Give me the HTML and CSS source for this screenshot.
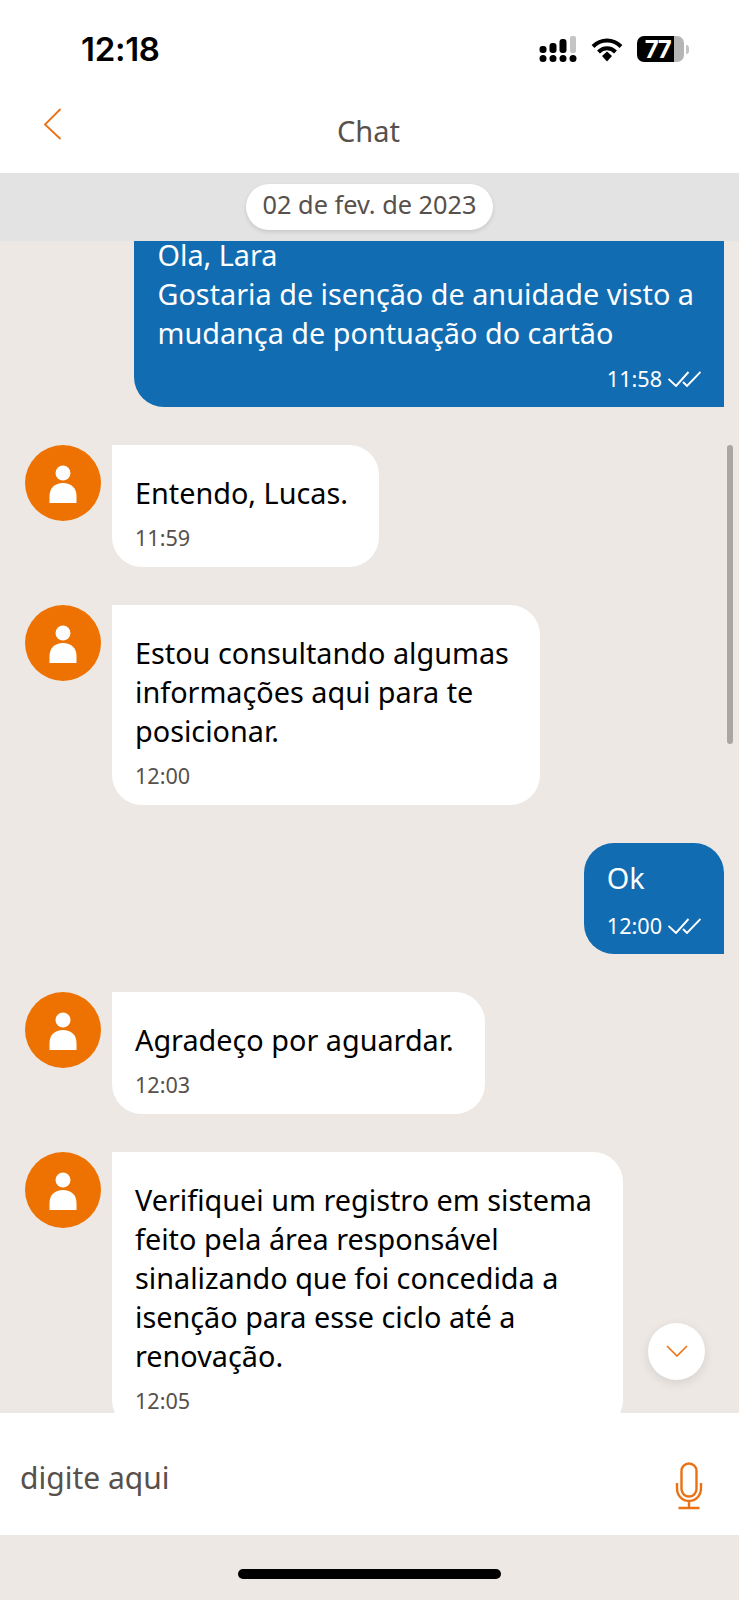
FILE: index.html
```html
<!DOCTYPE html>
<html lang="pt-BR">
<head>
    <meta charset="UTF-8">
    <meta name="viewport" content="width=device-width, initial-scale=1.0">
    <title>Chat</title>
    <link rel="stylesheet" href="styles.css">
</head>
<body>
    <div class="status-bar">
        <span class="clock">12:18</span>
        <div class="status-icons">
            <svg class="signal" width="38" height="26" viewBox="0 0 38 26">
                <rect x="0.500" y="10" width="7" height="7" rx="3" fill="#000"/>
                <rect x="10.500" y="7" width="7" height="10" rx="3" fill="#000"/>
                <rect x="20.500" y="3" width="7" height="14" rx="3" fill="#000"/>
                <rect x="31" y="0" width="6" height="17" rx="2" fill="#c4c4c4"/>
                <circle cx="4" cy="22.500" r="3.500" fill="#000"/>
                <circle cx="14" cy="22.500" r="3.500" fill="#000"/>
                <circle cx="24" cy="22.500" r="3.500" fill="#000"/>
                <circle cx="34" cy="22.500" r="3.500" fill="#000"/>
            </svg>
            <svg class="wifi" width="32" height="25" viewBox="0 0 32 25">
                <path d="M2 9.500C10 1.500 22 1.500 30 9.500" fill="none" stroke="#000" stroke-width="4"/>
                <path d="M7.500 15C12.500 10 19.500 10 24.500 15" fill="none" stroke="#000" stroke-width="4"/>
                <path d="M11 19 16 14.500 21 19 16 24.500Z" fill="#000"/>
            </svg>
            <div class="battery">
                <div class="battery-body">
                    <span class="battery-level">77</span>
                </div>
                <span class="battery-tip"></span>
            </div>
        </div>
    </div>

    <header class="chat-header">
        <svg class="back" width="20" height="32" viewBox="0 0 20 32">
            <path d="M17.500 1 2 16.500 17.500 31" fill="none" stroke="#ea7214" stroke-width="1.8"/>
        </svg>
        <h1>Chat</h1>
    </header>

    <div class="date-bar">
        <span class="date-pill">02 de fev. de 2023</span>
    </div>

    <main class="chat">
        <div class="scrollbar"></div>
        <div class="messages">
            <div class="msg msg-out first">
                <div class="bubble">
                    <p>Ola, Lara<br>Gostaria de isenção de anuidade visto a<br>mudança de pontuação do cartão</p>
                    <div class="time">11:58
                        <svg class="checks" width="33" height="16" viewBox="0 0 33 16">
                            <path d="M0.500 8 8 15 20.500 1M15 11 19 15 32.500 1" fill="none" stroke="#fff" stroke-width="1.900"/>
                        </svg>
                    </div>
                </div>
            </div>

            <div class="msg msg-in">
                <div class="avatar">
                    <svg width="30" height="38" viewBox="0 0 30 38">
                        <circle cx="15" cy="8" r="7.500" fill="#fff"/>
                        <path d="M1.500 38V31C1.500 23 7 18 15 18S28.500 23 28.500 31V38Z" fill="#fff"/>
                    </svg>
                </div>
                <div class="bubble">
                    <p>Entendo, Lucas.</p>
                    <div class="time">11:59</div>
                </div>
            </div>

            <div class="msg msg-in">
                <div class="avatar">
                    <svg width="30" height="38" viewBox="0 0 30 38">
                        <circle cx="15" cy="8" r="7.500" fill="#fff"/>
                        <path d="M1.500 38V31C1.500 23 7 18 15 18S28.500 23 28.500 31V38Z" fill="#fff"/>
                    </svg>
                </div>
                <div class="bubble">
                    <p>Estou consultando algumas<br>informações aqui para te<br>posicionar.</p>
                    <div class="time">12:00</div>
                </div>
            </div>

            <div class="msg msg-out">
                <div class="bubble">
                    <p>Ok</p>
                    <div class="time">12:00
                        <svg class="checks" width="33" height="16" viewBox="0 0 33 16">
                            <path d="M0.500 8 8 15 20.500 1M15 11 19 15 32.500 1" fill="none" stroke="#fff" stroke-width="1.900"/>
                        </svg>
                    </div>
                </div>
            </div>

            <div class="msg msg-in">
                <div class="avatar">
                    <svg width="30" height="38" viewBox="0 0 30 38">
                        <circle cx="15" cy="8" r="7.500" fill="#fff"/>
                        <path d="M1.500 38V31C1.500 23 7 18 15 18S28.500 23 28.500 31V38Z" fill="#fff"/>
                    </svg>
                </div>
                <div class="bubble">
                    <p>Agradeço por aguardar.</p>
                    <div class="time">12:03</div>
                </div>
            </div>

            <div class="msg msg-in">
                <div class="avatar">
                    <svg width="30" height="38" viewBox="0 0 30 38">
                        <circle cx="15" cy="8" r="7.500" fill="#fff"/>
                        <path d="M1.500 38V31C1.500 23 7 18 15 18S28.500 23 28.500 31V38Z" fill="#fff"/>
                    </svg>
                </div>
                <div class="bubble">
                    <p>Verifiquei um registro em sistema<br>feito pela área responsável<br>sinalizando que foi concedida a<br>isenção para esse ciclo até a<br>renovação.</p>
                    <div class="time">12:05</div>
                </div>
            </div>
        </div>

        <button class="scroll-down" type="button">
            <svg width="22" height="12" viewBox="0 0 22 12">
                <path d="M1 1 11 11 21 1" fill="none" stroke="#ea7214" stroke-width="1.6"/>
            </svg>
        </button>
    </main>

    <div class="input-bar">
        <span class="placeholder">digite aqui</span>
        <svg class="mic" width="28" height="48" viewBox="0 0 28 48">
            <rect x="6.500" y="1.500" width="15" height="33" rx="7.500" fill="none" stroke="#ea7214" stroke-width="2.400"/>
            <path d="M2 21V26C2 34 7.500 39 14 39S26 34 26 26V21M14 39V46M3.500 46H24.500" fill="none" stroke="#ea7214" stroke-width="2.400"/>
        </svg>
    </div>

    <div class="home-area">
        <div class="home-indicator"></div>
    </div>
</body>
</html>
```

FILE: styles.css
```css
* {
    margin: 0;
    padding: 0;
    box-sizing: border-box;
}

body {
    width: 739px;
    height: 1600px;
    overflow: hidden;
    display: flex;
    flex-direction: column;
    background: #ede8e4;
    font-family: 'Noto Sans', 'Open Sans', sans-serif;
}

/* Status bar */
.status-bar {
    height: 88px;
    flex: none;
    background: #fff;
    display: flex;
    align-items: flex-start;
    justify-content: space-between;
    padding: 30px 50px 0 81px;
}

.clock {
    font-family: Inter, sans-serif;
    font-size: 33px;
    font-weight: 600;
    line-height: 38px;
    letter-spacing: -0.3px;
    color: #000;
}

.status-icons {
    display: flex;
    align-items: center;
    gap: 14px;
    padding-top: 6px;
}

.battery {
    display: flex;
    align-items: center;
    gap: 2px;
}

.battery-body {
    width: 47px;
    height: 26px;
    border-radius: 7px;
    background: linear-gradient(to right, #000 79%, #b5b5b5 79%);
    display: flex;
    align-items: center;
    justify-content: center;
}

.battery-level {
    font-family: Inter, sans-serif;
    font-size: 24px;
    font-weight: 700;
    letter-spacing: -1.5px;
    color: #fff;
    padding-right: 6px;
}

.battery-tip {
    width: 3px;
    height: 9px;
    border-radius: 0 3px 3px 0;
    background: #c4c4c4;
}

/* Header */
.chat-header {
    height: 85px;
    flex: none;
    background: #fff;
    position: relative;
    display: flex;
    justify-content: center;
    padding: 24px 2px 0 0;
}

.chat-header h1 {
    font-size: 29px;
    font-weight: 400;
    line-height: 38px;
    color: #57504b;
}

.back {
    position: absolute;
    left: 43px;
    top: 20px;
}

/* Date */
.date-bar {
    height: 68px;
    flex: none;
    background: #e3e3e3;
    display: flex;
    justify-content: center;
    padding-top: 11px;
}

.date-pill {
    width: 247px;
    height: 46px;
    border-radius: 23px;
    background: #fff;
    box-shadow: 0 2px 4px rgba(0, 0, 0, 0.12);
    text-align: center;
    font-size: 25.3px;
    line-height: 41px;
    color: #57504b;
}

/* Messages */
.chat {
    height: 1172px;
    flex: none;
    position: relative;
    overflow: hidden;
}

.messages {
    display: flex;
    flex-direction: column;
    gap: 38px;
    margin-top: -23px;
}

.msg {
    display: flex;
    align-items: flex-start;
    gap: 11px;
    padding-left: 25px;
}

.msg-out {
    justify-content: flex-end;
    padding: 0 15px 0 0;
}

.avatar {
    width: 76px;
    height: 76px;
    flex: none;
    border-radius: 50%;
    background: #ee7202;
    display: flex;
    justify-content: center;
    padding-top: 20px;
}

.bubble {
    background: #fff;
    padding: 28px 31px 15px 23px;
    color: #000;
    font-size: 28.8px;
    line-height: 39px;
    border-radius: 0 30px 30px 30px;
}

.msg-out .bubble {
    background: #116cb1;
    color: #fff;
    border-radius: 30px 30px 0 30px;
    padding: 15px 23px 14px 23px;
}

.first .bubble {
    border-radius: 0 0 0 30px;
    padding-top: 17px;
}

.first p {
    padding-right: 7px;
}

.time {
    display: flex;
    align-items: center;
    gap: 6px;
    font-size: 21.6px;
    line-height: 28px;
    margin-top: 12px;
    color: #57504b;
}

.msg-out .time {
    justify-content: flex-end;
    color: #fff;
    margin-top: 15px;
}

.first .time {
    margin-top: 13px;
}

.scrollbar {
    position: absolute;
    right: 6px;
    top: 204px;
    width: 6px;
    height: 299px;
    border-radius: 3px;
    background: #a9a6a3;
}

.scroll-down {
    position: absolute;
    left: 648px;
    top: 1082px;
    width: 57px;
    height: 57px;
    border: none;
    border-radius: 50%;
    background: #fff;
    box-shadow: 0 3px 10px rgba(87, 80, 75, 0.15);
    display: flex;
    align-items: center;
    justify-content: center;
    padding-bottom: 2px;
}

/* Input */
.input-bar {
    height: 122px;
    flex: none;
    background: #fff;
    display: flex;
    align-items: center;
    justify-content: space-between;
    padding: 0 36px 0 20px;
}

.placeholder {
    font-size: 30px;
    color: #57504b;
    margin-top: 6px;
}

.mic {
    margin-top: 23px;
}

.home-area {
    flex: 1;
    display: flex;
    justify-content: center;
    padding-top: 34px;
}

.home-indicator {
    width: 263px;
    height: 10px;
    border-radius: 5px;
    background: #000;
}
```
